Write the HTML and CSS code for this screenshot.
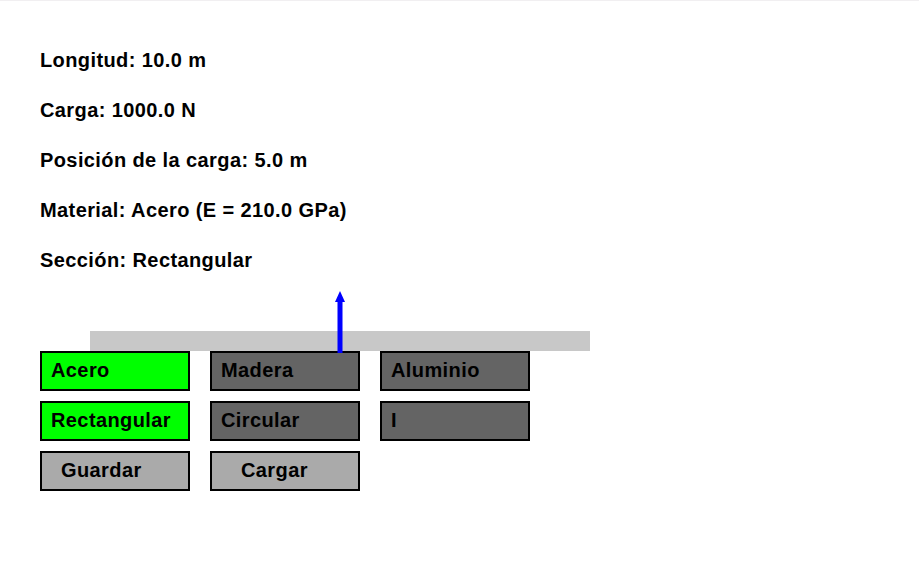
FILE: index.html
```html
<!DOCTYPE html>
<html>
<head>
<meta charset="utf-8">
<link rel="stylesheet" href="styles.css">
</head>
<body>
<div class="app">
  <div class="info">
    <div class="line">Longitud: 10.0 m</div>
    <div class="line">Carga: 1000.0 N</div>
    <div class="line">Posición de la carga: 5.0 m</div>
    <div class="line">Material: Acero (E = 210.0 GPa)</div>
    <div class="line">Sección: Rectangular</div>
  </div>
  <div class="stage">
    <div class="beam">
      <svg class="arrow" width="12" height="62" viewBox="0 0 12 62">
        <polygon points="6,0 1,11 11,11" fill="#0000ff"/>
        <rect x="3.5" y="10" width="5" height="52" fill="#0000ff"/>
      </svg>
    </div>
  </div>
  <div class="buttons">
    <div class="btn on">Acero</div>
    <div class="btn dark">Madera</div>
    <div class="btn dark">Aluminio</div>
    <div class="btn on">Rectangular</div>
    <div class="btn dark">Circular</div>
    <div class="btn dark">I</div>
    <div class="btn light pad20">Guardar</div>
    <div class="btn light pad30">Cargar</div>
  </div>
</div>
</body>
</html>
```
FILE: styles.css
```css
html, body {
  margin: 0;
  padding: 0;
  background: #ffffff;
}
body {
  width: 919px;
  height: 566px;
  border-top: 1px solid #f1eff1;
  box-sizing: border-box;
  font-family: "Liberation Sans", Arial, sans-serif;
  font-weight: bold;
  color: #000;
}
.app {
  padding-left: 40px;
  padding-top: 48px;
}
.info {
  display: flex;
  flex-direction: column;
  gap: 28px;
}
.line {
  font-size: 20px;
  line-height: 22px;
  height: 22px;
  letter-spacing: 0.4px;
}
.stage {
  padding-top: 60px;
  padding-left: 50px;
}
.beam {
  position: relative;
  width: 500px;
  height: 20px;
  background: #c8c8c8;
}
.arrow {
  position: absolute;
  left: 244px;
  top: -40px;
  display: block;
}
.buttons {
  display: grid;
  grid-template-columns: repeat(3, 150px);
  grid-auto-rows: 40px;
  column-gap: 20px;
  row-gap: 10px;
}
.btn {
  box-sizing: border-box;
  border: 2px solid #000;
  display: flex;
  align-items: center;
  padding-left: 9px;
  font-size: 20px;
  letter-spacing: 0.4px;
  padding-bottom: 2px;
}
.on { background: #00ff00; }
.dark { background: #646464; }
.light { background: #aaaaaa; }
.pad20 { padding-left: 19px; }
.pad30 { padding-left: 29px; }
```
